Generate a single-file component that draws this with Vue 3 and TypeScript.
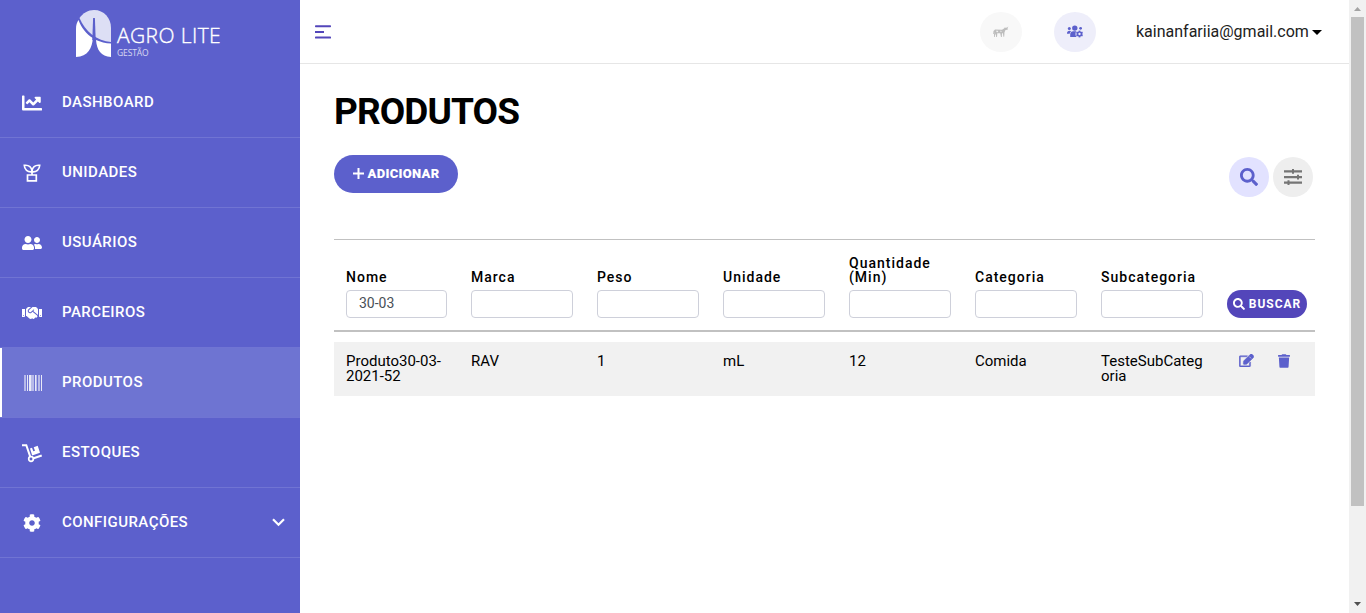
<script setup lang="ts">
import { reactive } from 'vue'

interface MenuItem {
  id: string
  label: string
  active?: boolean
  children?: boolean
}

const menu: MenuItem[] = [
  { id: 'dashboard', label: 'DASHBOARD' },
  { id: 'unidades', label: 'UNIDADES' },
  { id: 'usuarios', label: 'USUÁRIOS' },
  { id: 'parceiros', label: 'PARCEIROS' },
  { id: 'produtos', label: 'PRODUTOS', active: true },
  { id: 'estoques', label: 'ESTOQUES' },
  { id: 'config', label: 'CONFIGURAÇÕES', children: true },
]

const filters = reactive([
  { label: 'Nome', value: '30-03' },
  { label: 'Marca', value: '' },
  { label: 'Peso', value: '' },
  { label: 'Unidade', value: '' },
  { label: 'Quantidade (Min)', value: '' },
  { label: 'Categoria', value: '' },
  { label: 'Subcategoria', value: '' },
])

const rows: string[][] = [
  ['Produto30-03-2021-52', 'RAV', '1', 'mL', '12', 'Comida', 'TesteSubCategoria'],
]

const cog =
  'M487.4 315.7l-42.6-24.6c4.3-23.2 4.3-47 0-70.2l42.6-24.6c4.9-2.8 7.1-8.6 5.5-14-11.1-35.6-30-67.8-54.7-94.6-3.8-4.1-10-5.1-14.8-2.3L380.8 110c-17.9-15.4-38.5-27.3-60.8-35.1V25.8c0-5.6-3.9-10.5-9.4-11.7-36.7-8.2-74.3-7.8-109.2 0-5.5 1.2-9.4 6.1-9.4 11.7V75c-22.2 7.9-42.8 19.8-60.8 35.1L88.7 85.5c-4.9-2.8-11-1.9-14.8 2.3-24.7 26.7-43.6 58.9-54.7 94.6-1.7 5.4.6 11.2 5.5 14L67.3 221c-4.3 23.2-4.3 47 0 70.2l-42.6 24.6c-4.9 2.8-7.1 8.6-5.5 14 11.1 35.6 30 67.8 54.7 94.6 3.8 4.1 10 5.1 14.8 2.3l42.6-24.6c17.9 15.4 38.5 27.3 60.8 35.1v49.2c0 5.6 3.9 10.5 9.4 11.7 36.7 8.2 74.3 7.8 109.2 0 5.5-1.2 9.4-6.1 9.4-11.7v-49.2c22.2-7.9 42.8-19.8 60.8-35.1l42.6 24.6c4.9 2.8 11 1.9 14.8-2.3 24.7-26.7 43.6-58.9 54.7-94.6 1.5-5.5-.7-11.3-5.6-14.1zM256 336c-44.1 0-80-35.9-80-80s35.9-80 80-80 80 35.9 80 80-35.9 80-80 80z'
const search =
  'M505 442.7L405.3 343c-4.5-4.5-10.6-7-17-7H372c27.6-35.3 44-79.7 44-128C416 93.1 322.9 0 208 0S0 93.1 0 208s93.1 208 208 208c48.3 0 92.7-16.4 128-44v16.3c0 6.4 2.5 12.5 7 17l99.7 99.7c9.4 9.4 24.6 9.4 33.9 0l28.3-28.3c9.4-9.4 9.4-24.6.1-34zM208 336c-70.7 0-128-57.2-128-128 0-70.7 57.2-128 128-128 70.7 0 128 57.2 128 128 0 70.7-57.2 128-128 128z'
</script>

<template>
  <div class="app">
    <aside class="sidebar">
      <div class="brand">
        <svg class="mark" width="36" height="48" viewBox="0 0 36 48">
          <path d="M3.500 8C7 3 12 0 18 0c10 0 17 8 17 18v14C21 31 9 21.500 3.500 8z" fill="#dddff5" />
          <path d="M2.500 10C5.500 18 10.500 24 16.800 28 16.300 38 12 46.500 0 47V19c0-4 .8-6.500 2.500-9z" fill="#fff" />
          <path d="M20 30c4.500 2 9.500 3.300 15 3.500V47C25 46.500 20.800 40 20 30z" fill="#fff" />
          <path d="M17.100 8h1.800l.8 22h-3.400z" fill="#5c60cc" />
        </svg>
        <div class="brand-text">
          <span class="brand-name">AGRO LITE</span>
          <span class="brand-sub">GESTÃO</span>
        </div>
      </div>
      <nav>
        <a v-for="item in menu" :key="item.id" class="item" :class="{ active: item.active }">
          <svg v-if="item.id === 'dashboard'" class="ico" width="20" height="20" viewBox="0 0 512 512" fill="#fff">
            <path d="M496 384H64V80c0-8.840-7.160-16-16-16H16C7.160 64 0 71.160 0 80v336c0 17.670 14.330 32 32 32h464c8.840 0 16-7.160 16-16v-32c0-8.840-7.160-16-16-16zM464 96H345.940c-21.380 0-32.090 25.850-16.970 40.970l32.400 32.400L288 242.750l-73.370-73.370c-12.500-12.500-32.760-12.500-45.250 0l-68.690 68.690c-6.250 6.250-6.250 16.380 0 22.630l22.620 22.620c6.250 6.250 16.380 6.250 22.630 0L192 237.250l73.370 73.370c12.500 12.500 32.760 12.500 45.250 0l96-96 32.400 32.400c15.120 15.120 40.970 4.410 40.970-16.970V112c.01-8.840-7.150-16-15.990-16z" />
          </svg>
          <svg v-else-if="item.id === 'unidades'" class="ico" width="20" height="20" viewBox="0 0 20 20" fill="none" stroke="#fff" stroke-width="1.700">
            <path d="M5.500 12h8.800v5.800H5.500zM10 12V7.800M10 8.800C5.500 9.300 2.500 6.500 2.300 2.300 7 1.800 10 4 10 8.800zM10 8.800c4.500.5 7.500-2.300 7.700-6.500C13 1.800 10 4 10 8.800z" />
          </svg>
          <svg v-else-if="item.id === 'usuarios'" class="ico" width="20" height="16" viewBox="0 0 640 512" fill="#fff">
            <path d="M192 256c61.900 0 112-50.100 112-112S253.900 32 192 32 80 82.100 80 144s50.100 112 112 112zm76.800 32h-8.300c-20.800 10-43.900 16-68.500 16s-47.600-6-68.500-16h-8.300C51.600 288 0 339.600 0 403.200V432c0 26.500 21.500 48 48 48h288c26.500 0 48-21.500 48-48v-28.800c0-63.600-51.600-115.200-115.200-115.200zM480 256c53 0 96-43 96-96s-43-96-96-96-96 43-96 96 43 96 96 96zm48 32h-3.800c-13.900 4.800-28.600 8-44.200 8s-30.300-3.200-44.200-8H432c-20.400 0-39.200 5.900-55.700 15.400 24.400 26.300 39.700 61.200 39.700 99.800v38.400c0 2.200-.5 4.300-.6 6.400H592c26.500 0 48-21.500 48-48 0-61.900-50.100-112-112-112z" />
          </svg>
          <svg v-else-if="item.id === 'parceiros'" class="ico" width="20" height="16" viewBox="0 0 640 512" fill="#fff">
            <path d="M434.700 64h-85.900c-8 0-15.700 3-21.600 8.400l-98.300 90c-.1.1-.2.3-.3.4-16.600 15.600-16.300 40.500-2.100 56 12.700 13.900 39.400 17.600 56.100 2.700.1-.1.3-.1.4-.2l79.900-73.200c6.500-5.900 16.700-5.500 22.600 1 6 6.500 5.500 16.600-1 22.600l-26.100 23.900L504 313.800c2.900 2.400 5.500 5 7.900 7.700V128l-54.600-54.600c-5.900-6-14.100-9.400-22.600-9.400zM544 128.200v223.900c0 17.700 14.300 32 32 32h64V128.200h-96zm48 223.900c-8.800 0-16-7.200-16-16s7.200-16 16-16 16 7.200 16 16-7.200 16-16 16zM0 384h64c17.700 0 32-14.300 32-32V128.200H0V384zm48-63.900c8.800 0 16 7.200 16 16s-7.200 16-16 16-16-7.200-16-16c0-8.900 7.200-16 16-16zm435.900 18.600L334.600 217.500l-30 27.500c-29.700 27.100-75.200 24.500-101.700-4.400-26.900-29.400-24.800-74.900 4.400-101.700L289.100 64h-83.800c-8.500 0-16.600 3.400-22.600 9.400L128 128v223.900h18.300l90.500 81.900c27.400 22.300 67.700 18.100 90-9.300l.2-.2 17.900 15.500c15.900 13 39.400 10.500 52.300-5.400l31.400-38.600 5.400 4.400c13.700 11.100 33.900 9.100 45-4.700l9.500-11.700c11.200-13.800 9.100-33.900-4.600-45.100z" />
          </svg>
          <svg v-else-if="item.id === 'produtos'" class="ico" width="20" height="16" viewBox="0 0 20 16" fill="#fff">
            <path d="M5 0h1v16H5zM7 0h2v16H7zM13 0h1v16h-1zM19 0h1v16h-1z" opacity=".85" />
            <path d="M2 0h2v16H2zM9 0h3v16H9zM14 0h1v16h-1zM16 0h2v16h-2z" opacity=".5" />
          </svg>
          <svg v-else-if="item.id === 'estoques'" class="ico" width="20" height="20" viewBox="0 0 20 20">
            <path d="M0 2.200h4.300l4 11.600" fill="none" stroke="#fff" stroke-width="2" />
            <path d="M11 15.500l8.700-3" stroke="#fff" stroke-width="1.900" />
            <circle cx="9" cy="16" r="2.300" fill="none" stroke="#fff" stroke-width="1.700" />
            <path d="M8 5.500l2-.7 1.300 3.500 1.700-.6-1.300-3.500 4-1.400L18 9.800l-7.800 2.700z" fill="#fff" />
          </svg>
          <svg v-else class="ico" width="20" height="18" viewBox="-28 0 568 512" fill="#fff"><path :d="cog" /></svg>
          <span class="label">{{ item.label }}</span>
          <svg v-if="item.children" class="chev" width="13" height="9" viewBox="0 0 13 9">
            <path d="M1 1.300l5.500 5.500L12 1.300" fill="none" stroke="#fff" stroke-width="2.200" />
          </svg>
        </a>
      </nav>
    </aside>

    <main class="main">
      <header class="topbar">
        <svg class="burger" width="16" height="14" viewBox="0 0 16 14" fill="#5346ba">
          <rect y="0.200" width="16" height="2" rx=".7" /><rect y="6" width="9" height="2" /><rect y="11.600" width="16" height="2" rx=".7" />
        </svg>
        <span class="round cow">
          <svg width="16" height="12" viewBox="0 0 16 12">
            <path d="M.5 5L2 3.500l7 .3L11 2.500l1-1.200.8.700L15.500.5l-1.200 1.700.9.800-1 .8-1.700.2-1 2.300-.3 4.500h-.8l-.5-3.500H9L8.800 11H8l-.8-3.700H4.300L4 11h-.8l-.4-3.500-.8 2V11h-.8L1 8.500l.5-3-.6 2.500H.2z" fill="#bdbdbd" />
            <path d="M3.500 4.600l1.800.3-.6 1.400-1.400-.3zM7 4.800l1.700.2-.7 1.300z" fill="#f3f3f3" />
          </svg>
        </span>
        <span class="round team">
          <svg width="16" height="13" viewBox="0 0 16 13">
            <g fill="#5c60cc">
              <circle cx="2.300" cy="3.600" r="1.500" /><circle cx="7.800" cy="3.100" r="2.700" /><circle cx="13.600" cy="3.300" r="1.400" />
              <path d="M0 8.500C0 6.600 1 5.800 2.500 5.800c.7 0 1.300.2 1.700.5C3.300 7 2.900 7.700 2.700 8.700H0z" />
              <path d="M3.200 12V9.500c0-2 1.300-3.200 3-3.200h2.700c.4 0 .6.1 1 .3-.5 1-.7 2-.4 3 .3.900.8 1.600 1.500 2.400z" />
            </g>
            <circle cx="12.500" cy="9" r="4" fill="#eeeefa" />
            <svg x="8.800" y="5.300" width="7.400" height="7.400" viewBox="0 0 512 512"><path :d="cog" fill="#5c60cc" /></svg>
          </svg>
        </span>
        <span class="user">kainanfariia@gmail.com<i class="caret"></i></span>
      </header>

      <section class="content">
        <h1>PRODUTOS</h1>
        <div class="actions">
          <button class="add">
            <svg width="11" height="11" viewBox="0 0 11 11"><path d="M5.500 0v11M0 5.500h11" stroke="#fff" stroke-width="2" /></svg>
            <span>ADICIONAR</span>
          </button>
          <div class="tools">
            <span class="tool find"><svg width="18" height="18" viewBox="0 0 512 512" fill="#5c60cc"><path :d="search" /></svg></span>
            <span class="tool">
              <svg width="18" height="16" viewBox="0 0 18 16" fill="#757575">
                <path d="M0 1.300h18v2.200H0zM0 7h18v2.200H0zM0 12.500h18v2.200H0zM8 0h2v4.800H8zM13 5.700h2v4.800h-2zM3.500 11.200h2V16h-2z" />
              </svg>
            </span>
          </div>
        </div>

        <div class="table">
          <div class="grid head">
            <label v-for="f in filters" :key="f.label" class="cell">
              <span class="flabel">{{ f.label }}</span>
              <input v-model="f.value" type="text" />
            </label>
            <div class="cell">
              <button class="search">
                <svg width="12" height="12" viewBox="0 0 512 512" fill="#fff"><path :d="search" /></svg>
                <span>BUSCAR</span>
              </button>
            </div>
          </div>
          <div v-for="(row, i) in rows" :key="i" class="grid row">
            <div v-for="(value, j) in row" :key="j" class="cell">{{ value }}</div>
            <div class="cell icons">
              <svg width="15" height="13" viewBox="0 0 576 512" fill="#5c60cc" stroke="#5c60cc" stroke-width="16">
                <path d="M402.300 344.900l32-32c5-5 13.700-1.500 13.700 5.700V464c0 26.500-21.500 48-48 48H48c-26.500 0-48-21.500-48-48V112c0-26.500 21.500-48 48-48h273.500c7.100 0 10.700 8.600 5.700 13.700l-32 32c-1.500 1.500-3.500 2.300-5.700 2.300H48v352h352V350.500c0-2.100.8-4.100 2.300-5.600zM558.900 143.100L296.300 405.700l-90.400 10c-26.200 2.900-48.500-19.200-45.600-45.600l10-90.400L432.900 17.100c22.900-22.900 59.900-22.900 82.700 0l43.200 43.200c22.900 22.900 22.900 60 .1 82.800z" />
                <path d="M400 105l70 70" stroke="#f1f1f1" stroke-width="22" />
              </svg>
              <svg width="12" height="14" viewBox="0 0 448 512" fill="#5c60cc">
                <path d="M432 32H312l-9.400-18.700A24 24 0 0 0 281.100 0H166.800a23.720 23.720 0 0 0-21.400 13.300L136 32H16A16 16 0 0 0 0 48v32a16 16 0 0 0 16 16h416a16 16 0 0 0 16-16V48a16 16 0 0 0-16-16zM53.200 467a48 48 0 0 0 47.900 45h245.800a48 48 0 0 0 47.900-45L416 128H32z" />
              </svg>
            </div>
          </div>
        </div>
      </section>
    </main>

    <div class="scrollbar">
      <svg width="17" height="17" viewBox="0 0 17 17"><path d="M5 11h7L8.500 7z" fill="#a3a3a3" /></svg>
      <div class="thumb"></div>
      <svg width="17" height="17" viewBox="0 0 17 17"><path d="M5 6h7l-3.500 4z" fill="#505050" /></svg>
    </div>
  </div>
</template>

<style>
body {
  margin: 0;
  overflow: hidden;
}
</style>

<style scoped>
.app {
  display: flex;
  width: 1366px;
  height: 613px;
  overflow: hidden;
  background: #fff;
  font-family: Roboto, sans-serif;
  color: #000;
}
.app * {
  box-sizing: border-box;
}
.app svg {
  display: block;
  flex: none;
}
.sidebar {
  width: 300px;
  background: #5c60cc;
  color: #fff;
}
.brand {
  display: flex;
  height: 68px;
  padding: 10px 0 0 76px;
}
.brand-text {
  display: flex;
  flex-direction: column;
  padding: 13px 0 0 5px;
  font-family: "Open Sans", sans-serif;
  white-space: nowrap;
}
.brand-name {
  font-size: 21px;
  line-height: 25px;
  font-weight: 300;
  letter-spacing: 0.4px;
  -webkit-text-stroke: 0.35px #fff;
}
.brand-sub {
  font-size: 8.5px;
  line-height: 10px;
  opacity: 0.75;
  letter-spacing: -0.1px;
}
.item {
  display: flex;
  align-items: center;
  height: 70px;
  padding: 0 15px 0 22px;
  border-bottom: 1px solid #7074d3;
  font-size: 15px;
  font-weight: 500;
  letter-spacing: 0.45px;
}
.item.active {
  background: #6e74d2;
  box-shadow: inset 2px 0 #fff;
}
.ico {
  margin-right: 20px;
}
.label {
  flex: 1;
  line-height: 20px;
  padding-bottom: 2px;
}
.main {
  width: 1049px;
}
.topbar {
  display: flex;
  align-items: center;
  height: 64px;
  padding: 0 27px 0 15px;
  border-bottom: 1px solid #e6e6e6;
}
.burger {
  margin-right: auto;
}
.round {
  display: flex;
  align-items: center;
  justify-content: center;
  width: 42px;
  height: 40px;
  border-radius: 50%;
}
.cow {
  margin-right: 32px;
  background: #f8f8f8;
}
.team {
  margin-right: 40px;
  background: #eeeefa;
}
.user {
  display: flex;
  align-items: center;
  justify-content: space-between;
  width: 186px;
  font-size: 16px;
  color: #212121;
  white-space: nowrap;
}
.caret {
  margin-top: 2px;
  border: 5px solid transparent;
  border-top-color: #000;
  border-bottom: 0;
}
.content {
  padding: 25px 34px 0;
}
h1 {
  margin: 0;
  font-size: 37px;
  line-height: 46px;
  font-weight: 700;
  letter-spacing: -0.9px;
}
.actions {
  display: flex;
  justify-content: space-between;
  height: 104px;
  padding-top: 20px;
}
button {
  display: flex;
  align-items: center;
  justify-content: center;
  border: 0;
  padding: 0;
  color: #fff;
  font-family: inherit;
}
.add {
  gap: 4px;
  width: 124px;
  height: 38px;
  padding-bottom: 2px;
  border-radius: 19px;
  background: #5c60cc;
  font-size: 13px;
  font-weight: 900;
  letter-spacing: 0.3px;
}
.tools {
  display: flex;
  gap: 4px;
  padding: 2px 2px 0 0;
}
.tool {
  display: flex;
  align-items: center;
  justify-content: center;
  width: 40px;
  height: 40px;
  border-radius: 50%;
  background: #eee;
}
.tool.find {
  background: #e2e2ff;
}
.table {
  border-top: 1px solid #c1c1c1;
}
.grid {
  display: grid;
  grid-template-columns: 125px repeat(6, 126px) 100px;
}
.head {
  align-items: end;
  height: 92px;
  padding-bottom: 12px;
  border-bottom: 2px solid #c1c1c1;
}
.cell {
  padding: 0 12px;
}
.flabel {
  display: block;
  width: 96px;
  margin-bottom: 6px;
  font-size: 14px;
  line-height: 14px;
  font-weight: 500;
  letter-spacing: 1px;
}
input {
  display: block;
  width: 100%;
  height: 28px;
  padding: 0 12px 2px;
  border: 1px solid #ced0da;
  border-radius: 4px;
  outline: 0;
  background: #fff;
  color: #495057;
  font: 14px Roboto, sans-serif;
}
.search {
  gap: 4px;
  width: 80px;
  height: 28px;
  border-radius: 14px;
  background: #5346ba;
  font-size: 12px;
  font-weight: 700;
  letter-spacing: 1px;
}
.row {
  height: 54px;
  margin-top: 10px;
  padding-top: 12px;
  background: #f1f1f1;
  font-size: 15px;
  line-height: 15px;
  overflow-wrap: anywhere;
}
.icons {
  display: flex;
  gap: 24px;
  align-items: flex-start;
  padding-left: 24px;
}
.scrollbar {
  display: flex;
  flex-direction: column;
  width: 17px;
  background: #f1f1f1;
}
.thumb {
  width: 13px;
  height: 489px;
  margin: 0 2px auto;
  background: #c1c1c1;
}
</style>
